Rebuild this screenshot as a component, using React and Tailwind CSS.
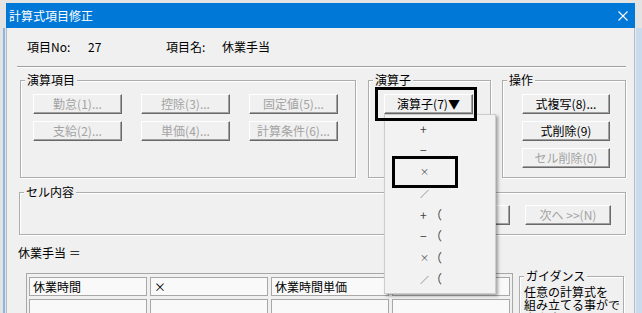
const F = "font-['Noto_Sans_CJK_JP',sans-serif]";

function Btn({ children, disabled, className = "" }) {
  return (
    <div
      className={`flex items-center justify-center h-[20px] bg-[#f0f0f0] border-t border-l border-t-white border-l-white border-b border-r border-b-[#696969] border-r-[#696969] shadow-[inset_-1px_-1px_0_#a0a0a0] text-[12px] leading-none whitespace-nowrap ${
        disabled ? "text-[#a3a3a3]" : "text-black"
      } ${className}`}
    >
      {children}
    </div>
  );
}

function Group({ label, className = "", children }) {
  return (
    <fieldset className={`shrink-0 border border-[#adadad] shadow-[1px_1px_0_#fff,inset_1px_1px_0_#fff] ${className}`}>
      <legend className="ml-[4px] px-[2px] text-[12px] leading-[16px] bg-[#f0f0f0]">{label}</legend>
      {children}
    </fieldset>
  );
}

function Cell({ children }) {
  return (
    <div className="h-[19px] border border-[#a8a8a8] bg-[#f9f9f9] pl-[3px] text-[12px] leading-[17px] whitespace-nowrap">
      {children}
    </div>
  );
}

const menuItems = [
  { op: "+", small: false, paren: false },
  { op: "−", small: false, paren: false },
  { op: "×", small: true, paren: false },
  { op: "／", small: true, paren: false },
  { op: "+", small: false, paren: true },
  { op: "−", small: false, paren: true },
  { op: "×", small: true, paren: true },
  { op: "／", small: true, paren: true },
];

export default function App() {
  return (
    <div className={`relative flex w-[642px] h-[313px] overflow-hidden bg-[#e3e3e3] text-black ${F}`}>
      {/* background window behind */}
      <div className="w-[6px] shrink-0 pt-[28px] flex">
        <div className="ml-[3px] w-[2px] bg-[#8ab6df]" />
      </div>

      <div className="w-[629px] shrink-0 mt-[3px] flex flex-col">
        <div className="h-[25px] shrink-0 bg-[#0078d7] flex items-center justify-between pl-[3px] pr-[7px] text-white text-[12px]">
          <span>計算式項目修正</span>
          <svg width="10" height="10" viewBox="0 0 10 10" stroke="white" strokeWidth="1.1">
            <path d="M0.5 0.5 L9.5 9.5 M9.5 0.5 L0.5 9.5" />
          </svg>
        </div>

        <div className="flex-1 bg-[#f0f0f0] border-x border-[#b4bcc6]">
          <div className="flex pt-[11px] pl-[20px] text-[12px] leading-[16px]">
            <span className="w-[61px]">項目No:</span>
            <span className="w-[78px]">27</span>
            <span className="w-[56px]">項目名:</span>
            <span>休業手当</span>
          </div>

          <div className="mt-[11px] ml-[10px] mr-[8px] border-t border-t-[#a0a0a0] border-b border-b-white" />

          <div className="flex mt-[4px] pl-[13px]">
            <Group label="演算項目" className="w-[336px] h-[106px]">
              <div className="grid grid-cols-[89px_89px_89px] gap-x-[19px] gap-y-[7px] pt-[6px] pl-[12px]">
                <Btn disabled>勤怠(1)...</Btn>
                <Btn disabled>控除(3)...</Btn>
                <Btn disabled>固定値(5)...</Btn>
                <Btn disabled>支給(2)...</Btn>
                <Btn disabled>単価(4)...</Btn>
                <Btn disabled>計算条件(6)...</Btn>
              </div>
            </Group>
            <Group label="演算子" className="ml-[12px] w-[123px] h-[106px]">
              <div className="pt-[6px] pl-[15px]">
                <Btn className="w-[89px]">演算子(7)▼</Btn>
              </div>
            </Group>
            <Group label="操作" className="ml-[11px] w-[124px] h-[106px]">
              <div className="flex flex-col gap-[7px] pt-[6px] pl-[19px]">
                <Btn className="w-[88px]">式複写(8)...</Btn>
                <Btn className="w-[88px]">式削除(9)</Btn>
                <Btn disabled className="w-[88px]">セル削除(0)</Btn>
              </div>
            </Group>
          </div>

          <div className="mt-[6px] pl-[12px]">
            <Group label="セル内容" className="w-[607px] h-[51px]">
              <div className="flex justify-end gap-[15px] pt-[5px] pr-[14px]">
                <Btn className="w-[86px]">&lt;&lt; 前へ(P)</Btn>
                <Btn disabled className="w-[86px]">次へ &gt;&gt;(N)</Btn>
              </div>
            </Group>
          </div>

          <div className="mt-[10px] pl-[11px] text-[12px] leading-[16px]">休業手当 ＝</div>

          <div className="flex items-start mt-[7px] pl-[19px]">
            <div className="mt-[5px] border border-[#a8a8a8] pt-[3px] px-[2px] pb-[2px]">
              <div className="grid grid-cols-[118px_118px_118px_118px] gap-[3px]">
                <Cell>休業時間</Cell>
                <Cell>×</Cell>
                <Cell>休業時間単価</Cell>
                <Cell></Cell>
                <Cell></Cell>
                <Cell></Cell>
                <Cell></Cell>
                <Cell></Cell>
              </div>
            </div>
            <Group label="ガイダンス" className="ml-[6px] w-[105px] h-[70px]">
              <div className="pt-[1px] pl-[4px] text-[12px] leading-[13px]">
                任意の計算式を
                <br />
                組み立てる事がで
                <br />
                きます。
              </div>
            </Group>
          </div>
        </div>
      </div>

      <div className="flex-1 pt-[28px] flex">
        <div className="flex-1 border-l border-[#e9e9e9] bg-[#c9dbed]" />
      </div>

      {/* open operator menu */}
      <div className="absolute left-[384px] top-[114px] w-[112px] py-[3px] bg-[#f2f2f2] border border-[#cccccc] shadow-[2px_2px_3px_rgba(0,0,0,0.35)]">
        {menuItems.map((item, i) => (
          <div key={i} className="h-[21.5px] flex items-center pl-[35px] text-[12px] text-[#444]">
            <span className={item.small ? "w-[8px] text-[9px]" : "w-[8px]"}>{item.op}</span>
            {item.paren && <span className="ml-[2px]">（</span>}
          </div>
        ))}
      </div>

      {/* annotation boxes */}
      <div className="absolute left-[375px] top-[87px] w-[102px] h-[34px] border-[3px] border-black" />
      <div className="absolute left-[392px] top-[156px] w-[66px] h-[32px] border-[3px] border-black" />
    </div>
  );
}
